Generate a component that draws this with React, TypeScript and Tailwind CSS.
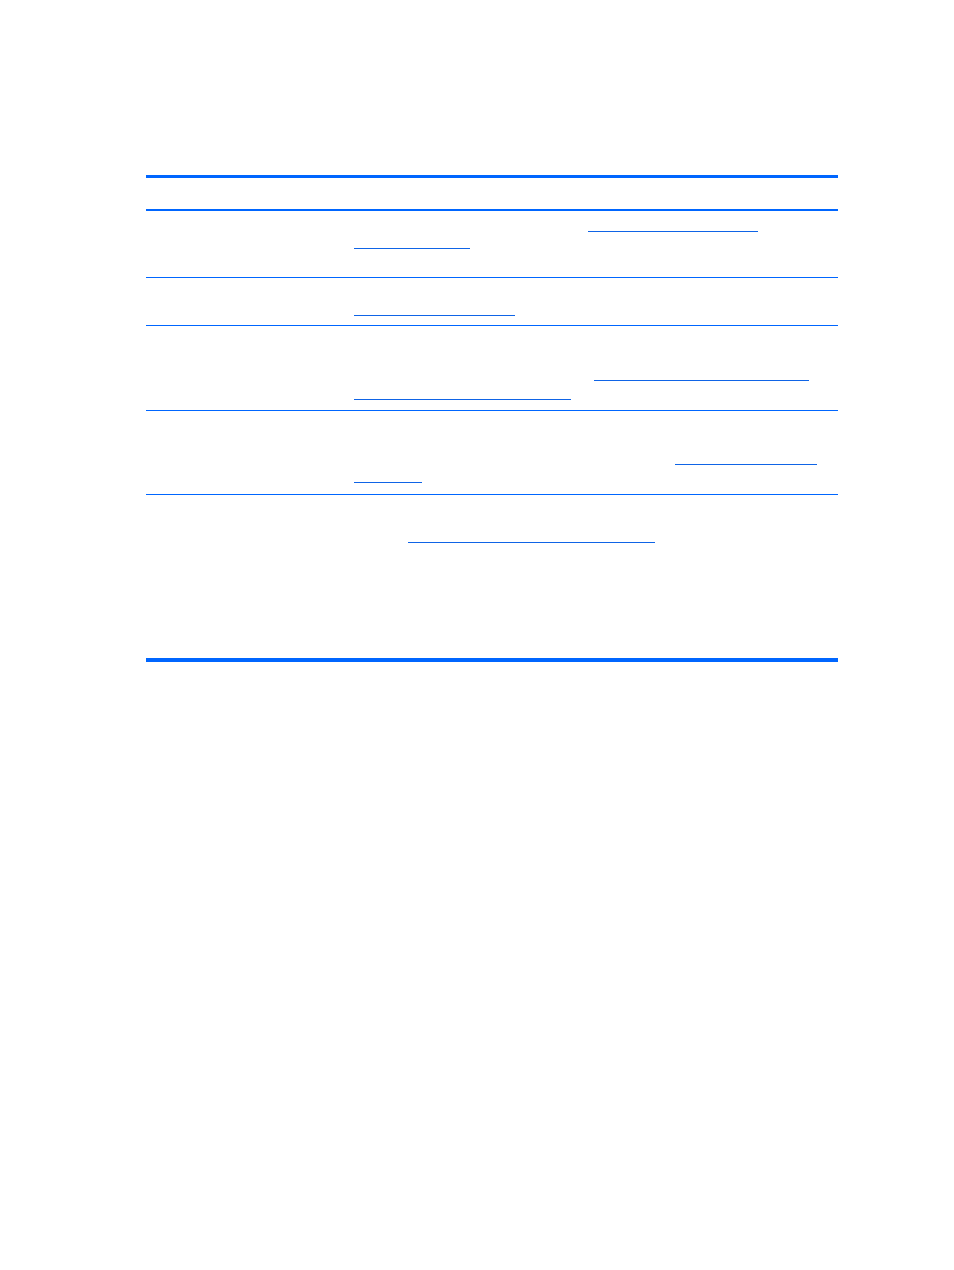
export default function App() {
  return (
    <div className="min-h-[1270px] w-[954px] bg-white pt-[175px] pl-[146px]">
      <div className="w-[692px] border-t-[3px] border-[#0066ff]">
        {/* header */}
        <div className="h-[33px] border-b-2 border-[#0066ff]" />

        {/* row 1 */}
        <div className="h-[67px] border-b border-[#0066ff] pl-[208px] flex flex-col">
          <div className="mt-[20px] ml-[234px] h-px w-[170px] bg-[#0f64e6]" />
          <div className="mt-[16px] h-px w-[116px] bg-[#0f64e6]" />
        </div>

        {/* row 2 */}
        <div className="h-[48px] border-b border-[#0066ff] pl-[208px] flex flex-col">
          <div className="mt-[37px] h-px w-[161px] bg-[#0f64e6]" />
        </div>

        {/* row 3 */}
        <div className="h-[85px] border-b border-[#0066ff] pl-[208px] flex flex-col">
          <div className="mt-[54px] ml-[240px] h-px w-[215px] bg-[#0f64e6]" />
          <div className="mt-[18px] h-px w-[217px] bg-[#0f64e6]" />
        </div>

        {/* row 4 */}
        <div className="h-[84px] border-b border-[#0066ff] pl-[208px] flex flex-col">
          <div className="mt-[53px] ml-[321px] h-px w-[142px] bg-[#0f64e6]" />
          <div className="mt-[17px] h-px w-[68px] bg-[#0f64e6]" />
        </div>

        {/* row 5 */}
        <div className="h-[167px] border-b-4 border-[#0066ff] pl-[208px] flex flex-col">
          <div className="mt-[47px] ml-[54px] h-px w-[247px] bg-[#0f64e6]" />
        </div>
      </div>
    </div>
  );
}
